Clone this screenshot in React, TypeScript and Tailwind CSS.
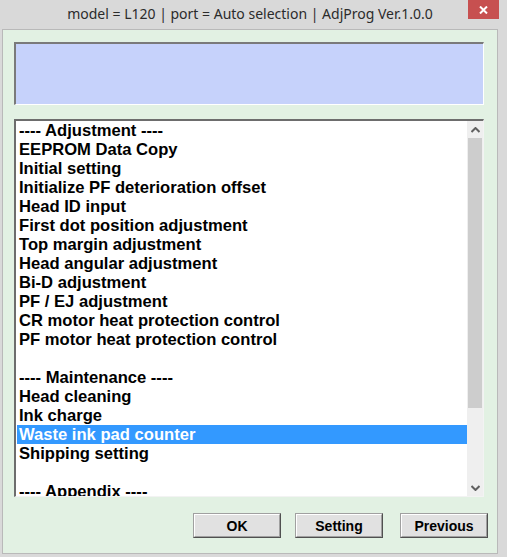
import React from "react";

const items: { t: string; sel?: boolean }[] = [
  { t: "---- Adjustment ----" },
  { t: "EEPROM Data Copy" },
  { t: "Initial setting" },
  { t: "Initialize PF deterioration offset" },
  { t: "Head ID input" },
  { t: "First dot position adjustment" },
  { t: "Top margin adjustment" },
  { t: "Head angular adjustment" },
  { t: "Bi-D adjustment" },
  { t: "PF / EJ adjustment" },
  { t: "CR motor heat protection control" },
  { t: "PF motor heat protection control" },
  { t: "" },
  { t: "---- Maintenance ----" },
  { t: "Head cleaning" },
  { t: "Ink charge" },
  { t: "Waste ink pad counter", sel: true },
  { t: "Shipping setting" },
  { t: "" },
  { t: "---- Appendix ----" },
];

function Btn({ label }: { label: string }) {
  return (
    <div className="w-[88px] h-[25px] border border-t-[#a0a0a0] border-l-[#a0a0a0] border-r-[#505050] border-b-[#505050] bg-[#e1e1e1]">
      <div className="w-full h-full border border-t-white border-l-white border-r-[#a0a0a0] border-b-[#a0a0a0] flex items-center justify-center text-[14px] font-bold text-black leading-none" style={{ fontFamily: '"Liberation Sans", Arial, sans-serif' }}>
        {label}
      </div>
    </div>
  );
}

export default function App() {
  return (
    <div className="w-[507px] h-[557px] bg-[#d9d9d9] flex flex-col overflow-hidden">
      <div className="h-[29px] flex relative">
        <div className="flex-1 flex items-center justify-center pb-[3px] pr-[7px] text-[14px] text-[#2b2b2b]" style={{ fontFamily: '"Noto Sans", "Open Sans", sans-serif' }}>
          model = L120 | port = Auto selection | AdjProg Ver.1.0.0
        </div>
        <div className="absolute left-[468px] top-0 w-[31px] h-[19px] bg-[#c75050] flex items-center justify-center">
          <svg width="9" height="8" viewBox="0 0 9 8">
            <path d="M1 0.5 L8 7.5 M8 0.5 L1 7.5" stroke="white" strokeWidth="2" />
          </svg>
        </div>
      </div>
      <div className="flex pl-[2px]">
        <div className="w-[496px] h-[525px] border border-[#b9b9b9] bg-[#e2f1e3] flex flex-col pt-[12px] pl-[11px] pr-[11px]">
          <div className="w-[470px] h-[63px] border-t-2 border-l-2 border-t-[#7a7a7a] border-l-[#7a7a7a] border-b border-r border-b-white border-r-white bg-[#c6d2fb]" />
          <div className="mt-[14px] w-[470px] h-[378px] border-t-2 border-l-2 border-t-[#6d6d6d] border-l-[#6d6d6d] border-b border-r border-b-[#f3f3f3] border-r-[#f3f3f3] bg-white flex">
            <div className="flex-1 overflow-hidden pl-[1px]">
              {items.map((it, i) => (
                <div
                  key={i}
                  className={`h-[19px] flex items-center pl-[2px] pt-[2px] text-[16.6px] font-bold leading-none whitespace-nowrap ${it.sel ? "bg-[#3399ff] text-white" : "text-black"}`}
                  style={{ fontFamily: '"Liberation Sans", Arial, sans-serif' }}
                >
                  {it.t}
                </div>
              ))}
            </div>
            <div className="w-[16px] bg-[#efefef] flex flex-col">
              <div className="h-[17px] flex items-center justify-center">
                <svg width="9" height="6" viewBox="0 0 9 6">
                  <path d="M0.5 5 L4.5 1 L8.5 5" stroke="#606060" strokeWidth="2" fill="none" />
                </svg>
              </div>
              <div className="h-[270px] mx-[1px] bg-[#cdcdcd]" />
              <div className="flex-1" />
              <div className="h-[17px] flex items-center justify-center">
                <svg width="9" height="6" viewBox="0 0 9 6">
                  <path d="M0.5 1 L4.5 5 L8.5 1" stroke="#606060" strokeWidth="2" fill="none" />
                </svg>
              </div>
            </div>
          </div>
          <div className="mt-[16px] flex justify-end mr-[-2px]">
            <Btn label="OK" />
            <div className="w-[14px]" />
            <Btn label="Setting" />
            <div className="w-[17px]" />
            <Btn label="Previous" />
          </div>
        </div>
      </div>
    </div>
  );
}
